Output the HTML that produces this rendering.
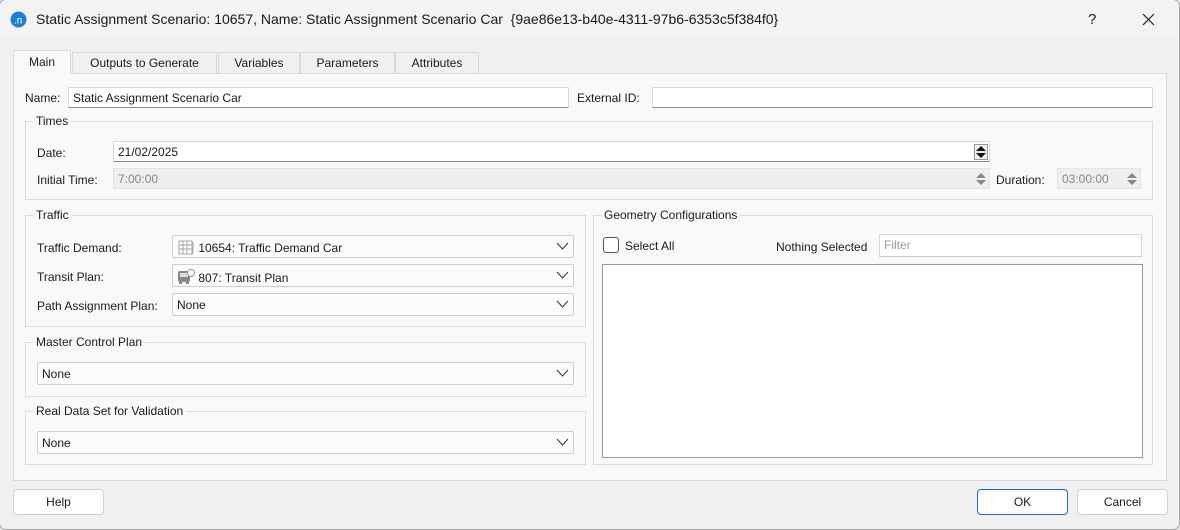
<!DOCTYPE html>
<html><head><meta charset="utf-8"><style>
*{box-sizing:border-box;margin:0;padding:0}
body{width:1180px;height:530px;background:#e6e6e6;font-family:"Liberation Sans",sans-serif;font-size:12px;color:#1a1a1a;position:relative;overflow:hidden}
.win{position:absolute;left:-1px;top:-1px;width:1181px;height:531px;background:#f0f0f0;border:1px solid #a8a8a8;border-radius:7px;overflow:hidden}
.a{position:absolute}
.title{left:0;top:0;width:100%;height:38px;background:#f3f3f3}
.inp{position:absolute;background:#fff;border:1px solid #d9d9d9;border-bottom:1px solid #888;height:21px;padding:3px 4px;white-space:nowrap}
.dis{background:#efefef;border:1px solid #e4e4e4;color:#888}
.grp{position:absolute;border:1px solid #dcdcdc}
.gt{position:absolute;background:#f9f9f9;padding:0 3px;top:-8px;left:7px}
.combo{position:absolute;background:#fbfbfb;border:1px solid #cfcfcf;border-radius:2px;height:23px;padding:4px 4px;white-space:nowrap}
.combo svg.ch{position:absolute;right:4px;top:6px}
.btn{position:absolute;background:#fdfdfd;border:1px solid #d0d0d0;border-radius:4px;height:26px;text-align:center;line-height:24px}
.tab{position:absolute;top:52px;height:21px;border:1px solid #dadada;border-bottom:none;background:#f0f0f0;text-align:center;line-height:21px}
</style></head><body><div class="win">
<div class="a title"></div>
<svg class="a" style="left:10px;top:11px" width="17" height="17"><circle cx="8.5" cy="8.5" r="8" fill="#1d7fd6"/><text x="4" y="12.5" font-size="10" fill="#fff" font-family="Liberation Sans">.n</text></svg>
<div class="a" style="left:36px;top:11px;font-size:14px">Static Assignment Scenario: 10657, Name: Static Assignment Scenario Car&nbsp; {9ae86e13-b40e-4311-97b6-6353c5f384f0}</div>
<div class="a" style="left:1088px;top:11px;font-size:15px">?</div>
<svg class="a" style="left:1142px;top:13px" width="13" height="13"><path d="M1 1L12 12M12 1L1 12" stroke="#222" stroke-width="1.2"/></svg>

<div class="a" style="left:13px;top:73px;width:1154px;height:408px;background:#f9f9f9;border:1px solid #dadada"></div>
<div class="tab" style="left:13px;width:58px;top:50px;height:24px;background:#f9f9f9;line-height:23px">Main</div>
<div class="tab" style="left:72px;width:145px">Outputs to Generate</div>
<div class="tab" style="left:218px;width:82px">Variables</div>
<div class="tab" style="left:300px;width:95px">Parameters</div>
<div class="tab" style="left:395px;width:84px">Attributes</div>

<div class="a" style="left:25px;top:91px">Name:</div>
<div class="inp" style="left:68px;top:87px;width:501px">Static Assignment Scenario Car</div>
<div class="a" style="left:577px;top:91px">External ID:</div>
<div class="inp" style="left:652px;top:87px;width:501px"></div>

<div class="grp" style="left:25px;top:121px;width:1128px;height:79px"><div class="gt">Times</div></div>
<div class="a" style="left:37px;top:146px">Date:</div>
<div class="inp" style="left:113px;top:141px;width:877px">21/02/2025</div>
<svg class="a" style="left:974px;top:144px" width="14" height="16"><rect x="0.5" y="0.5" width="13" height="15" fill="#eee" stroke="#999"/><path d="M2 7L7 2L12 7Z M2 9L7 14L12 9Z" fill="#111"/></svg>
<div class="a" style="left:37px;top:173px">Initial Time:</div>
<div class="inp dis" style="left:113px;top:168px;width:877px">7:00:00</div>
<svg class="a" style="left:974px;top:171px" width="14" height="16"><path d="M2 7L7 2L12 7Z M2 9L7 14L12 9Z" fill="#888"/></svg>
<div class="a" style="left:996px;top:173px">Duration:</div>
<div class="inp dis" style="left:1057px;top:168px;width:84px">03:00:00</div>
<svg class="a" style="left:1125px;top:171px" width="14" height="16"><path d="M2 7L7 2L12 7Z M2 9L7 14L12 9Z" fill="#888"/></svg>

<div class="grp" style="left:25px;top:215px;width:561px;height:112px"><div class="gt">Traffic</div></div>
<div class="a" style="left:37px;top:241px">Traffic Demand:</div>
<div class="combo" style="left:172px;top:235px;width:402px"><svg style="vertical-align:-3px" width="18" height="15"><rect x="2" y="1" width="13" height="13" fill="none" stroke="#aaa"/><path d="M6 1V14M10 1V14M2 5H15M2 9H15M16 2V14" stroke="#aaa"/></svg> 10654: Traffic Demand Car<svg class="ch" width="13" height="9"><path d="M1 1L6.5 7L12 1" fill="none" stroke="#333"/></svg></div>
<div class="a" style="left:37px;top:270px">Transit Plan:</div>
<div class="combo" style="left:172px;top:264px;width:402px"><svg style="vertical-align:-3px" width="18" height="16"><rect x="1" y="2" width="12" height="11" rx="2" fill="#888"/><rect x="3" y="4" width="8" height="4" fill="#ddd"/><circle cx="14" cy="4" r="3.5" fill="#fff" stroke="#999"/><rect x="2" y="13" width="3" height="2" fill="#888"/><rect x="9" y="13" width="3" height="2" fill="#888"/></svg> 807: Transit Plan<svg class="ch" width="13" height="9"><path d="M1 1L6.5 7L12 1" fill="none" stroke="#333"/></svg></div>
<div class="a" style="left:37px;top:299px">Path Assignment Plan:</div>
<div class="combo" style="left:172px;top:293px;width:402px">None<svg class="ch" width="13" height="9"><path d="M1 1L6.5 7L12 1" fill="none" stroke="#333"/></svg></div>

<div class="grp" style="left:25px;top:342px;width:561px;height:55px"><div class="gt">Master Control Plan</div></div>
<div class="combo" style="left:37px;top:362px;width:537px">None<svg class="ch" width="13" height="9"><path d="M1 1L6.5 7L12 1" fill="none" stroke="#333"/></svg></div>
<div class="grp" style="left:25px;top:411px;width:561px;height:54px"><div class="gt">Real Data Set for Validation</div></div>
<div class="combo" style="left:37px;top:431px;width:537px">None<svg class="ch" width="13" height="9"><path d="M1 1L6.5 7L12 1" fill="none" stroke="#333"/></svg></div>

<div class="grp" style="left:593px;top:215px;width:560px;height:250px"><div class="gt">Geometry Configurations</div></div>
<div class="a" style="left:603px;top:237px;width:16px;height:16px;border:1px solid #555;border-radius:3px;background:#fff"></div>
<div class="a" style="left:625px;top:239px">Select All</div>
<div class="a" style="left:776px;top:240px">Nothing Selected</div>
<div class="inp" style="left:879px;top:234px;width:263px;height:23px;color:#999;border-bottom-color:#ccc">Filter</div>
<div class="a" style="left:602px;top:264px;width:541px;height:194px;background:#fff;border:1px solid #999"></div>

<div class="btn" style="left:13px;top:489px;width:91px">Help</div>
<div class="btn" style="left:977px;top:489px;width:91px;border-color:#1a6fc4">OK</div>
<div class="btn" style="left:1077px;top:489px;width:91px">Cancel</div>
</div></body></html>
